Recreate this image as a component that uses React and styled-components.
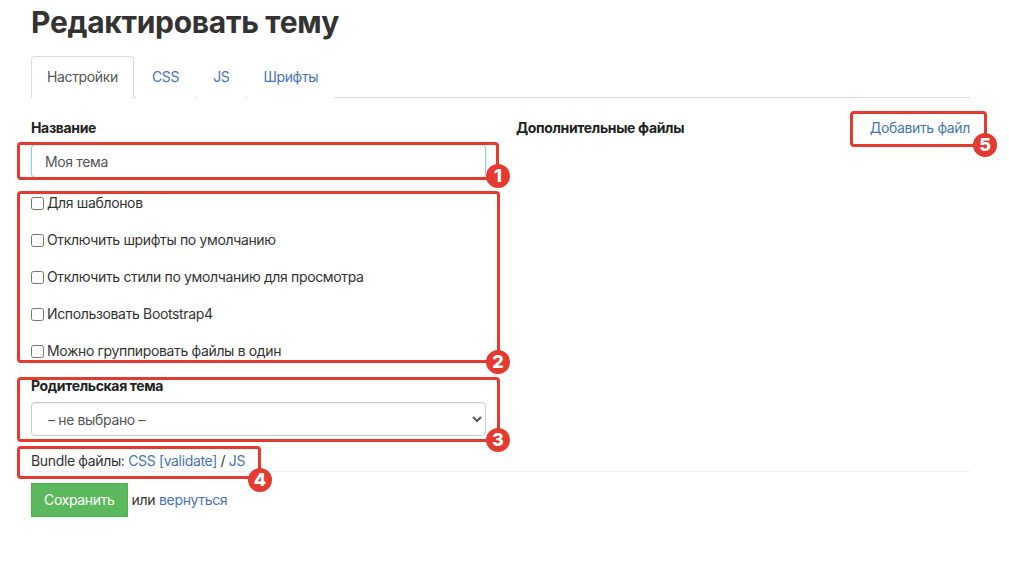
import React, { useState } from 'react';
import styled, { createGlobalStyle } from 'styled-components';

const GlobalStyle = createGlobalStyle`
  body {
    margin: 0;
    background: #ffffff;
    font-family: Inter, "Noto Sans", "Liberation Sans", sans-serif;
    font-size: 14px;
    line-height: 20px;
    letter-spacing: -0.35px;
    color: #333333;
  }
  * { box-sizing: border-box; }
`;

// аннотации поверх формы
const marks = [
  { n: 1, x: 17, y: 142, w: 482, h: 38, bx: 498, by: 176 },
  { n: 2, x: 17, y: 191, w: 483, h: 172, bx: 498, by: 362 },
  { n: 3, x: 17, y: 377, w: 483, h: 65, bx: 498, by: 440 },
  { n: 4, x: 17, y: 446, w: 244, h: 33, bx: 260, by: 480 },
  { n: 5, x: 850, y: 111, w: 137, h: 36, bx: 985, by: 145 },
];

const options = [
  'Для шаблонов',
  'Отключить шрифты по умолчанию',
  'Отключить стили по умолчанию для просмотра',
  'Использовать Bootstrap4',
  'Можно группировать файлы в один',
];

const App = () => {
  const [name, setName] = useState('Моя тема');
  const [tab, setTab] = useState('Настройки');

  return (
    <Page>
      <GlobalStyle />
      <Title>Редактировать тему</Title>
      <Tabs>
        {['Настройки', 'CSS', 'JS', 'Шрифты'].map((t) => (
          <Tab key={t} $active={tab === t} onClick={() => setTab(t)}>
            {t}
          </Tab>
        ))}
      </Tabs>

      <Row>
        <Column>
          <FormGroup>
            <Label>Название</Label>
            <Input value={name} onChange={(e) => setName(e.target.value)} />
          </FormGroup>

          <Checks>
            {options.map((o) => (
              <CheckLabel key={o}>
                <input type="checkbox" />
                {o}
              </CheckLabel>
            ))}
          </Checks>

          <FormGroup>
            <Label>Родительская тема</Label>
            <Select defaultValue="">
              <option value="">– не выбрано –</option>
            </Select>
          </FormGroup>

          <Bundle>
            Bundle файлы: <Link href="#">CSS</Link> <Link href="#">[validate]</Link> / <Link href="#">JS</Link>
          </Bundle>
        </Column>

        <Column>
          <FilesHeader>
            <strong>Дополнительные файлы</strong>
            <Link href="#">Добавить файл</Link>
          </FilesHeader>
        </Column>
      </Row>

      <Divider />

      <Actions>
        <SaveButton type="submit">Сохранить</SaveButton>
        <span>или</span>
        <Link href="#">вернуться</Link>
      </Actions>

      {marks.map((m) => (
        <React.Fragment key={m.n}>
          <Frame style={{ left: m.x, top: m.y, width: m.w, height: m.h }} />
          <Badge style={{ left: m.bx - 12, top: m.by - 12 }}>{m.n}</Badge>
        </React.Fragment>
      ))}
    </Page>
  );
};

// Styled Components
const Page = styled.div`
  position: relative;
  width: 1009px;
  min-height: 562px;
  padding: 1px 39px 0 31px;
`;

const Title = styled.h1`
  margin: 3px 0 0;
  font-size: 30px;
  line-height: 36px;
  font-weight: 700;
  color: #333;
  letter-spacing: -0.3px;
`;

const Tabs = styled.ul`
  display: flex;
  margin: 16px 0 0;
  padding: 0;
  list-style: none;
  border-bottom: 1px solid #dddddd;
`;

const Tab = styled.li`
  margin-right: 2px;
  margin-bottom: -1px;
  padding: 10px 15px;
  line-height: 20px;
  border: 1px solid ${(p) => (p.$active ? '#dddddd' : 'transparent')};
  border-bottom-color: ${(p) => (p.$active ? '#ffffff' : 'transparent')};
  border-radius: 4px 4px 0 0;
  background: #fff;
  color: ${(p) => (p.$active ? '#555555' : '#4674b6')};
  cursor: pointer;
`;

const Row = styled.div`
  display: grid;
  grid-template-columns: 455px 454px;
  gap: 30px;
  margin-top: 20px;
`;

const Column = styled.div`
  display: flex;
  flex-direction: column;
`;

const FormGroup = styled.div`
  display: flex;
  flex-direction: column;
  margin-bottom: 15px;
`;

const Label = styled.label`
  font-weight: 700;
  color: #222;
  margin-bottom: 6px;
`;

const Input = styled.input`
  height: 34px;
  padding: 6px 13px;
  font: inherit;
  letter-spacing: inherit;
  color: #555;
  border: 1px solid #9fc6ec;
  border-radius: 4px;
  box-shadow: inset 0 1px 1px rgba(0, 0, 0, 0.05), 0 0 5px rgba(102, 175, 233, 0.35);
  outline: none;
`;

const Checks = styled.div`
  display: flex;
  flex-direction: column;
  gap: 17px;
  margin-bottom: 15px;

  input {
    width: 13px;
    height: 13px;
    margin: 0 3px 0 0;
  }
`;

const CheckLabel = styled.label`
  display: flex;
  align-items: center;
  line-height: 20px;
  color: #333;
`;

const Select = styled.select`
  height: 34px;
  padding: 6px 12px;
  font: inherit;
  letter-spacing: inherit;
  color: #555;
  background: #fff;
  border: 1px solid #cccccc;
  border-radius: 4px;
  box-shadow: inset 0 1px 1px rgba(0, 0, 0, 0.05);
`;

const Bundle = styled.div`
  line-height: 20px;
  color: #333;
`;

const Link = styled.a`
  color: #4674b6;
  text-decoration: none;
`;

const FilesHeader = styled.div`
  display: flex;
  justify-content: space-between;
  align-items: center;
  strong {
    color: #222;
  }
`;

const Divider = styled.hr`
  margin: 0;
  border: 0;
  border-top: 1px solid #eeeeee;
`;

const Actions = styled.div`
  display: flex;
  align-items: center;
  gap: 4px;
  margin-top: 11px;
`;

const SaveButton = styled.button`
  height: 34px;
  padding: 6px 12px;
  font: inherit;
  letter-spacing: inherit;
  color: #fff;
  background-color: #5cb85c;
  border: 1px solid #4cae4c;
  border-radius: 0;
  cursor: pointer;
`;

const Frame = styled.div`
  position: absolute;
  border: 3px solid #e53a2f;
  border-radius: 4px;
  pointer-events: none;
`;

const Badge = styled.div`
  position: absolute;
  width: 24px;
  height: 24px;
  border-radius: 50%;
  background: #e53a2f;
  color: #fff;
  font-weight: 800;
  font-size: 18px;
  line-height: 24px;
  letter-spacing: 0;
  text-align: center;
`;

export default App;
